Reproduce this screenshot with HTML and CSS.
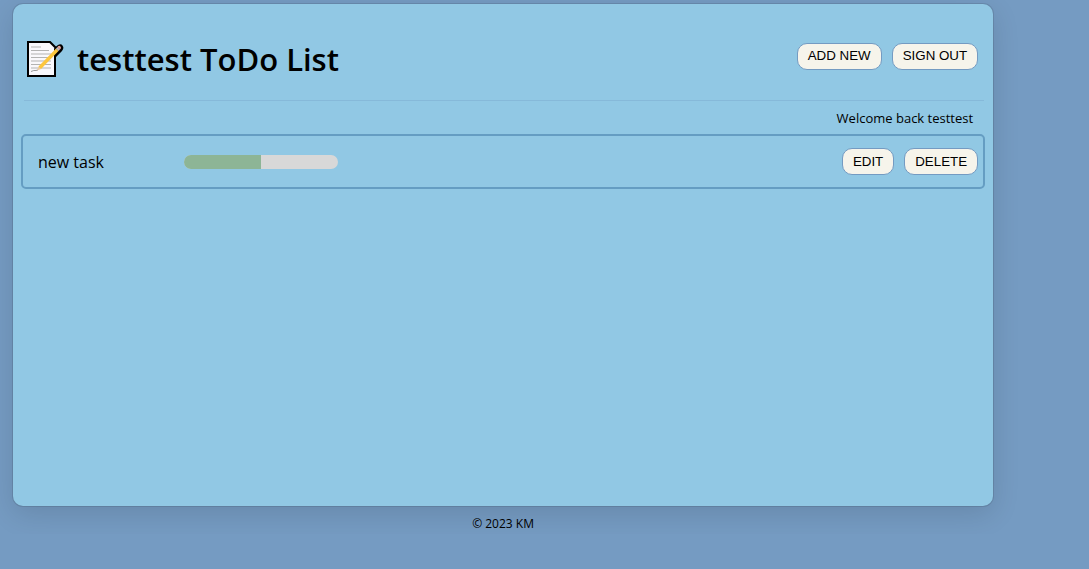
FILE: index.html
```html
<!DOCTYPE html>
<html lang="en">
<head>
<meta charset="utf-8">
<meta name="viewport" content="width=device-width, initial-scale=1">
<title>ToDo List</title>
<link rel="stylesheet" href="styles.css">
</head>
<body>
<div class="page">
  <main class="app">
    <header class="list-header">
      <h1 class="list-title">
        <svg class="memo" viewBox="0 0 38 38" aria-hidden="true">
          <path class="memo-ink" d="M1 1H24.500L30 6.500L32 5Q35 3.500 36.500 5.500Q38.500 8 36 11L30 17V37H1Z"/>
          <path class="memo-paper" d="M3 3H23V8H28V35H3Z"/>
          <path class="memo-paper" d="M22 3H23.500L28.500 8L27 10H22Z"/>
          <path class="memo-lines" d="M5 7H15M5 10.500H23M5 14H25M5 17.500H25M5 21H25M5 24.500H25M5 28H25"/>
          <path class="memo-scribble" d="M5 31.500Q8 30 10 30.500L12 30"/>
          <path class="memo-wood" d="M11 30.500L12.500 26.500L15 29Z"/>
          <path class="memo-pencil" d="M12.500 26.500L30 8.500L32.500 11L15 29Z"/>
          <path class="memo-ferrule" d="M30 8.500L31.500 7L34 9.500L32.500 11Z"/>
          <path class="memo-eraser" d="M31.500 7Q33 5 34.500 6.500Q36 8 34 9.500Z"/>
        </svg>
        <span>testtest ToDo List</span>
      </h1>
      <div class="buttons">
        <button class="btn" type="button">ADD NEW</button>
        <button class="btn" type="button">SIGN OUT</button>
      </div>
    </header>
    <p class="welcome">Welcome back testtest</p>
    <ul class="tasks">
      <li class="task">
        <div class="task-info">
          <p class="task-name">new task</p>
          <div class="progress" role="progressbar" aria-label="new task" aria-valuenow="50" aria-valuemin="0" aria-valuemax="100">
            <div class="progress-fill" style="width: 50%"></div>
          </div>
        </div>
        <div class="buttons">
          <button class="btn" type="button">EDIT</button>
          <button class="btn" type="button">DELETE</button>
        </div>
      </li>
    </ul>
  </main>
  <footer class="copyright">© 2023 KM</footer>
</div>
</body>
</html>
```
FILE: styles.css
```css
* {
  box-sizing: border-box;
}

body {
  margin: 0;
  background: #759bc2;
  color: #000;
  font-family: "Trebuchet MS", "Open Sans", sans-serif;
  font-size: 16px;
}

.page {
  width: 90%;
  margin: 4px 0 0 13px;
}

.app {
  min-height: calc(100vh - 67px);
  padding: 8px;
  border-radius: 10px;
  background: #91c8e4;
  box-shadow: rgba(0, 0, 0, 0.12) 0 8px 28px 0, rgba(0, 0, 0, 0.1) 0 0 0 1px;
}

.list-header {
  display: flex;
  align-items: center;
  justify-content: space-between;
  height: 89px;
  margin: 0 1px 0 3px;
  padding: 0 6px 0 2px;
  border-bottom: 1px solid #86b9d9;
}

.list-title {
  display: flex;
  align-items: center;
  gap: 13px;
  margin: 0;
  padding-top: 6px;
  font-size: 31px;
  font-weight: 600;
  line-height: 40px;
}

.memo {
  width: 38px;
  height: 38px;
}

.memo-ink { fill: #000; }
.memo-paper { fill: #f9f8fc; }
.memo-lines { fill: none; stroke: #b3b3b3; }
.memo-scribble { fill: none; stroke: #999; }
.memo-wood { fill: #ecc9a0; }
.memo-pencil { fill: #fcc63d; }
.memo-ferrule { fill: #c5bcc0; }
.memo-eraser { fill: #e8a49c; }

.buttons {
  display: flex;
  gap: 10px;
}

.btn {
  height: 27px;
  padding: 0 10px;
  border: 1px solid #749bc2;
  border-radius: 10px;
  background: #f6f4eb;
  color: #000;
  font-family: "Liberation Sans", Arial, sans-serif;
  line-height: 16px;
}

.welcome {
  margin: 0;
  padding: 7px 12px 6px 0;
  font-size: 13px;
  line-height: 20px;
  text-align: right;
}

.tasks {
  margin: 0;
  padding: 0;
  list-style: none;
}

.task {
  display: flex;
  align-items: center;
  justify-content: space-between;
  min-height: 55px;
  padding: 0 5px 0 15px;
  border: 2px solid #659dc2;
  border-radius: 5px;
}

.task-info {
  display: grid;
  flex: 1;
  grid-template-columns: 146px 154px;
  align-items: center;
}

.task-name {
  margin: 0;
}

.progress {
  height: 14px;
  overflow: hidden;
  border-radius: 7px;
  background: #d8d8d8;
}

.progress-fill {
  height: 100%;
  background: #8db596;
}

.copyright {
  padding-top: 8px;
  font-size: 12px;
  line-height: 20px;
  text-align: center;
}
```
